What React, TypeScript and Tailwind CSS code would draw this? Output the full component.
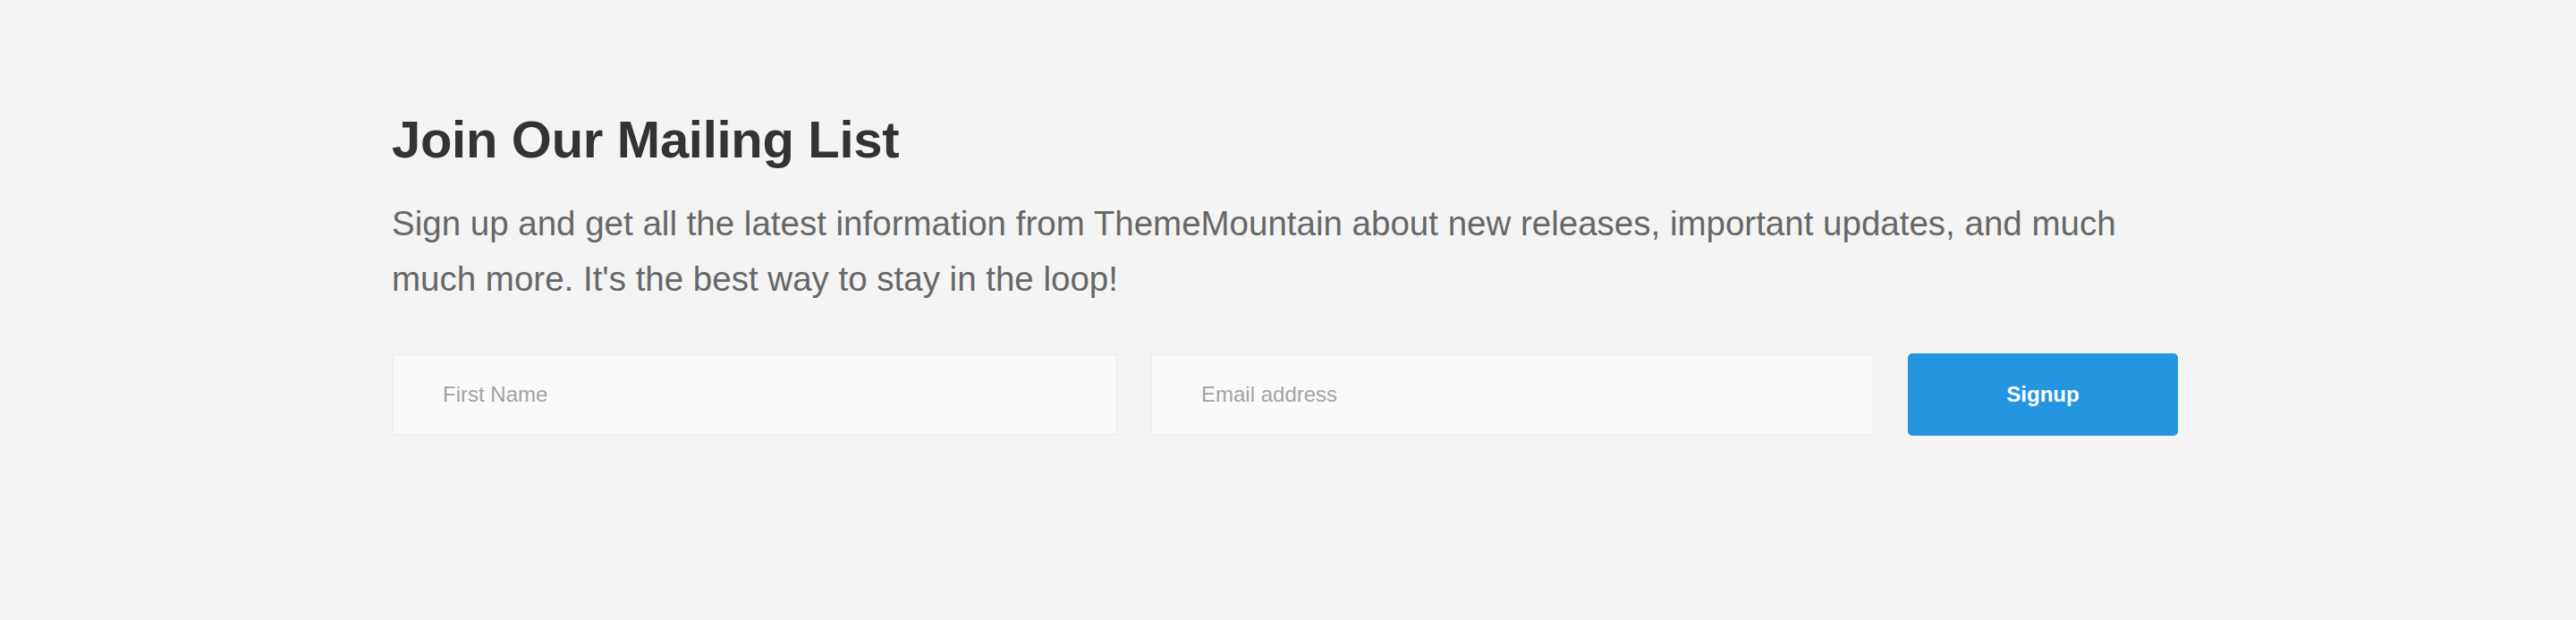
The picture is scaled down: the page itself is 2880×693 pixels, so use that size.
export default function App() {
  return (
    <div className="min-h-[693px] w-full bg-[#f4f4f4] font-['Liberation_Sans',Arial,sans-serif]">
      <div className="mx-auto w-[2000px] pt-[121px]">
        <h3 className="-ml-[2px] text-[58px] leading-[70px] font-bold text-[#333333] tracking-[-0.3px]">
          Join Our Mailing List
        </h3>
        <p className="-ml-[2px] mt-[28px] text-[38.5px] leading-[62px] text-[#676767] w-[1980px]">
          Sign up and get all the latest information from ThemeMountain about new releases, important updates, and much
          much more. It's the best way to stay in the loop!
        </p>
        <form className="mt-[53px] flex items-stretch" onSubmit={(e) => e.preventDefault()}>
          <input
            type="text"
            placeholder="First Name"
            className="-ml-[1px] w-[810px] h-[90px] bg-[#fafafa] border border-[#ebebeb] pl-[55px] text-[24px] text-[#666666] placeholder:text-[#a3a3a3] outline-none"
          />
          <input
            type="email"
            placeholder="Email address"
            className="ml-[38px] w-[808px] h-[90px] bg-[#fafafa] border border-[#ebebeb] pl-[55px] text-[24px] text-[#666666] placeholder:text-[#a3a3a3] outline-none"
          />
          <button
            type="submit"
            className="ml-[38px] w-[302px] h-[92px] -mt-[1px] rounded-[5px] bg-[#2395e1] text-white text-[24px] font-bold"
          >
            Signup
          </button>
        </form>
      </div>
    </div>
  );
}
